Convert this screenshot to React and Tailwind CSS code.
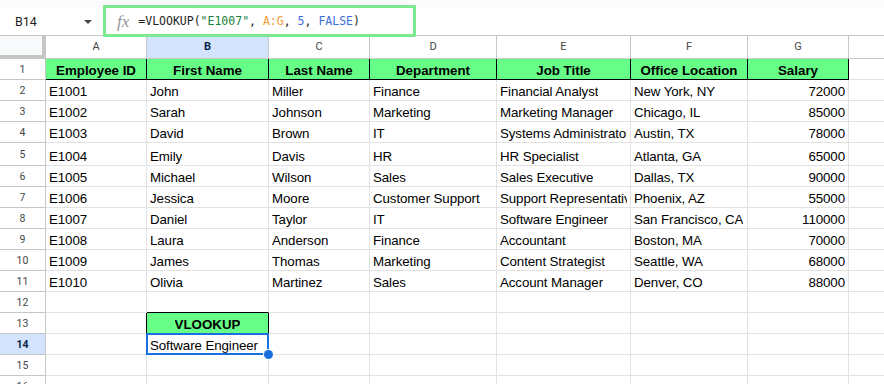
import clsx from "clsx";

const HEAD = ["Employee ID", "First Name", "Last Name", "Department", "Job Title", "Office Location", "Salary"];

const ROWS = [
  ["E1001", "John", "Miller", "Finance", "Financial Analyst", "New York, NY", "72000"],
  ["E1002", "Sarah", "Johnson", "Marketing", "Marketing Manager", "Chicago, IL", "85000"],
  ["E1003", "David", "Brown", "IT", "Systems Administrator", "Austin, TX", "78000"],
  ["E1004", "Emily", "Davis", "HR", "HR Specialist", "Atlanta, GA", "65000"],
  ["E1005", "Michael", "Wilson", "Sales", "Sales Executive", "Dallas, TX", "90000"],
  ["E1006", "Jessica", "Moore", "Customer Support", "Support Representative", "Phoenix, AZ", "55000"],
  ["E1007", "Daniel", "Taylor", "IT", "Software Engineer", "San Francisco, CA", "110000"],
  ["E1008", "Laura", "Anderson", "Finance", "Accountant", "Boston, MA", "70000"],
  ["E1009", "James", "Thomas", "Marketing", "Content Strategist", "Seattle, WA", "68000"],
  ["E1010", "Olivia", "Martinez", "Sales", "Account Manager", "Denver, CO", "88000"],
];

const COLS = [
  { id: "A", w: "w-[101px]" },
  { id: "B", w: "w-[122px]" },
  { id: "C", w: "w-[101px]" },
  { id: "D", w: "w-[127px]" },
  { id: "E", w: "w-[134px]" },
  { id: "F", w: "w-[117px]" },
  { id: "G", w: "w-[101px]" },
];

function cellText(r, ci) {
  if (r === 1) return HEAD[ci];
  if (r >= 2 && r <= 11) return ROWS[r - 2][ci];
  if (r === 13 && ci === 1) return "VLOOKUP";
  if (r === 14 && ci === 1) return "Software Engineer";
  return "";
}

function Cell({ r, ci, w }) {
  const green = r === 1 || (r === 13 && ci === 1);
  const rightBlack = r === 1 || (r === 13 && (ci === 0 || ci === 1));
  const bottomBlack = r === 1 || (r === 12 && ci === 1) || (r === 13 && ci === 1);
  const num = r >= 2 && r <= 11 && ci === 6;
  const selected = r === 14 && ci === 1;

  return (
    <div
      className={clsx(
        "relative shrink-0 flex items-end px-[3px] border-r border-b whitespace-nowrap text-[13.33px] leading-4 text-black",
        w,
        rightBlack ? "border-r-black" : "border-r-[#e2e2e2]",
        bottomBlack ? "border-b-black" : "border-b-[#e2e2e2]",
        green ? "bg-[#67fe88] font-bold justify-center" : "tracking-[-0.1px]",
        num && "justify-end"
      )}
    >
      <div className="overflow-hidden">{cellText(r, ci)}</div>
      {selected && (
        <div className="absolute -inset-px z-10 border-2 border-[#1a6fe0]">
          <div className="absolute -right-[6px] -bottom-[6px] w-[9px] h-[9px] rounded-full bg-[#1a6fe0] ring-1 ring-white" />
        </div>
      )}
    </div>
  );
}

export default function App() {
  const rows = Array.from({ length: 16 }, (_, i) => i + 1);

  return (
    <div className="relative w-[884px] h-[384px] overflow-hidden bg-white font-['Liberation_Sans',Arial,sans-serif]">
      <div className="h-[7px] bg-[#f9fbfd]" />

      {/* formula bar */}
      <div className="flex h-[29px] pt-[2px] border-b border-[#c7c7c7]">
        <div className="w-[103px] flex items-center pl-[15px] pr-[11px] justify-between">
          <span className="font-['Roboto',sans-serif] text-[12.5px] text-[#1f1f1f]">B14</span>
          <svg width="8" height="4" viewBox="0 0 8 4">
            <path d="M0 0h8L4 4z" fill="#444746" />
          </svg>
        </div>
        <div className="flex items-center pl-[14px]">
          <span className="font-['Liberation_Serif',serif] italic text-[17px] text-[#94989c] mr-[9px]">fx</span>
          <span className="font-['DejaVu_Sans_Mono',monospace] text-[11.5px] text-[#1f1f1f] whitespace-pre">
            =VLOOKUP(<span className="text-[#188038]">"E1007"</span>, <span className="text-[#f39b33]">A:G</span>,{" "}
            <span className="text-[#3b6fd8]">5</span>, <span className="text-[#3b6fd8]">FALSE</span>)
          </span>
        </div>
      </div>
      <div className="absolute left-[103px] top-[5px] w-[313px] h-[32px] border-[3px] border-[#7be98f] rounded-[1px]" />

      {/* column headers */}
      <div className="flex h-[23px] font-['Roboto',sans-serif] text-[11px] text-[#444746]">
        <div className="w-[46px] shrink-0 bg-[#f8f9fa] border-r-4 border-b-4 border-[#c4c7c5]" />
        {COLS.map((c) => (
          <div
            key={c.id}
            className={clsx(
              "shrink-0 flex items-center justify-center pt-px border-r border-b border-[#c4c7c5]",
              c.w,
              c.id === "B" && "bg-[#d3e3fd] text-[#041e49] font-bold"
            )}
          >
            {c.id}
          </div>
        ))}
        <div className="flex-1 border-b border-[#c4c7c5]" />
      </div>

      {/* grid */}
      {rows.map((r) => (
        <div key={r} className={clsx("flex", r === 5 ? "h-[23px]" : "h-[21px]")}>
          <div
            className={clsx(
              "w-[46px] shrink-0 flex items-center justify-center pt-px border-r border-b border-[#c4c7c5] font-['Roboto',sans-serif] text-[10.5px]",
              r === 14 ? "bg-[#d3e3fd] text-[#041e49] font-bold" : "text-[#444746]"
            )}
          >
            {r}
          </div>
          {COLS.map((c, ci) => (
            <Cell key={c.id} r={r} ci={ci} w={c.w} />
          ))}
          <div className="flex-1 border-b border-[#e2e2e2]" />
        </div>
      ))}
    </div>
  );
}
